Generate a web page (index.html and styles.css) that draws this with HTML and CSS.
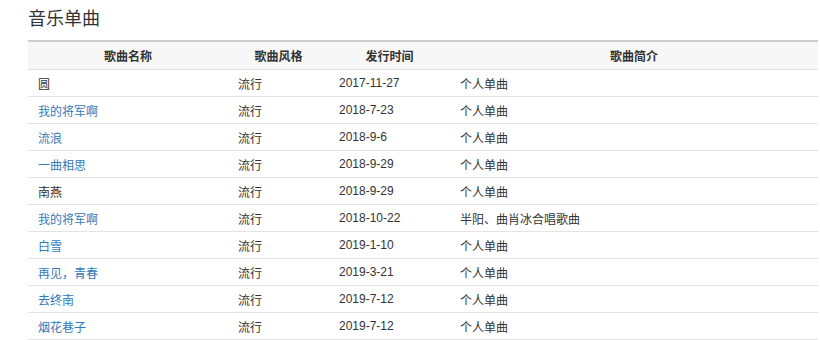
FILE: index.html
```html
<!DOCTYPE html>
<html lang="zh">
<head>
<meta charset="utf-8">
<link rel="stylesheet" href="styles.css">
</head>
<body>
<div class="page">
  <h2 class="title">音乐单曲</h2>
  <table class="songs">
    <colgroup>
      <col class="c-name"><col class="c-style"><col class="c-date"><col class="c-desc">
    </colgroup>
    <thead>
      <tr><th>歌曲名称</th><th>歌曲风格</th><th>发行时间</th><th>歌曲简介</th></tr>
    </thead>
    <tbody>
      <tr><td>圆</td><td>流行</td><td>2017-11-27</td><td>个人单曲</td></tr>
      <tr><td><a href="#">我的将军啊</a></td><td>流行</td><td>2018-7-23</td><td>个人单曲</td></tr>
      <tr><td><a href="#">流浪</a></td><td>流行</td><td>2018-9-6</td><td>个人单曲</td></tr>
      <tr><td><a href="#">一曲相思</a></td><td>流行</td><td>2018-9-29</td><td>个人单曲</td></tr>
      <tr><td>南燕</td><td>流行</td><td>2018-9-29</td><td>个人单曲</td></tr>
      <tr><td><a href="#">我的将军啊</a></td><td>流行</td><td>2018-10-22</td><td>半阳、曲肖冰合唱歌曲</td></tr>
      <tr><td><a href="#">白雪</a></td><td>流行</td><td>2019-1-10</td><td>个人单曲</td></tr>
      <tr><td><a href="#">再见，青春</a></td><td>流行</td><td>2019-3-21</td><td>个人单曲</td></tr>
      <tr><td><a href="#">去终南</a></td><td>流行</td><td>2019-7-12</td><td>个人单曲</td></tr>
      <tr><td><a href="#">烟花巷子</a></td><td>流行</td><td>2019-7-12</td><td>个人单曲</td></tr>
    </tbody>
  </table>
</div>
</body>
</html>
```
FILE: styles.css
```css
html, body {
  margin: 0;
  padding: 0;
  background: #fff;
}
body {
  font-family: "Liberation Sans", "Noto Sans CJK SC", sans-serif;
  font-size: 12px;
  color: #333;
}
.page {
  padding: 0 2px 0 28px;
}
.title {
  margin: 0;
  padding-top: 7px;
  height: 40px;
  box-sizing: border-box;
  font-size: 18px;
  line-height: 24px;
  font-weight: normal;
  color: #333;
}
.songs {
  width: 790px;
  border-collapse: collapse;
  table-layout: fixed;
}
.c-name { width: 200px; }
.c-style { width: 101px; }
.c-date { width: 121px; }
.c-desc { width: 368px; }
.songs thead tr {
  background: #f7f7f7;
  border-top: 2px solid #cccccc;
  border-bottom: 1px solid #e3e3e3;
}
.songs th {
  height: 27px;
  padding: 0;
  font-weight: bold;
  text-align: center;
  vertical-align: middle;
  color: #333;
}
.songs tbody tr {
  border-bottom: 1px solid #e3e3e3;
}
.songs td {
  height: 26px;
  padding: 0 0 0 10px;
  vertical-align: middle;
  white-space: nowrap;
}
.songs a {
  color: #337ab7;
  text-decoration: none;
}
```
